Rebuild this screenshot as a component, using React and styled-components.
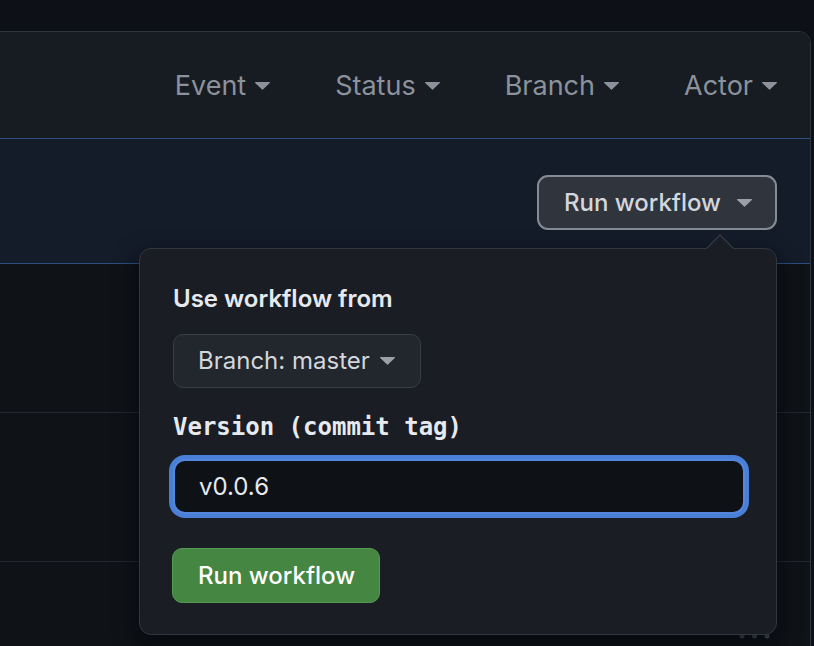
import React from "react";
import styled, { createGlobalStyle } from "styled-components";

const GlobalStyle = createGlobalStyle`
  * { box-sizing: border-box; }
  html, body { margin: 0; padding: 0; background: #0d1117; }
  body { font-family: Inter, "Noto Sans", sans-serif; overflow: hidden; }
`;

const Page = styled.div`
  width: 814px;
  height: 646px;
  overflow: hidden;
  padding: 31px 3px 0 0;
  background: #0d1117;
`;

const Box = styled.section`
  margin-left: -40px;
  border: 1px solid #30363d;
  border-radius: 12px;
  background: #0d1117;
`;

const Header = styled.header`
  height: 106px;
  display: flex;
  align-items: center;
  justify-content: flex-end;
  gap: 65px;
  padding-right: 33px;
  background: #171b22;
  border-radius: 11px 11px 0 0;
`;

const Filter = styled.button`
  display: flex;
  align-items: center;
  gap: 9px;
  padding: 0;
  border: 0;
  background: none;
  font: 400 27px/34px Inter, "Noto Sans", sans-serif;
  color: #8b929c;
  margin-top: 2px;
`;

const FocusRow = styled.div`
  height: 126px;
  display: flex;
  align-items: center;
  justify-content: flex-end;
  padding: 3px 33px 0 0;
  background: #141c2a;
  border-top: 1px solid #2b4d82;
  border-bottom: 1px solid #2b4d82;
`;

const Anchor = styled.div`
  position: relative;
`;

const SecondaryButton = styled.button`
  display: flex;
  align-items: center;
  gap: 16px;
  height: 55px;
  padding: 0 23px 0 25px;
  border: 2px solid #868c95;
  border-radius: 11px;
  background: #30343c;
  color: #d2d7de;
  font: 500 24px/1 Inter, "Noto Sans", sans-serif;
`;

const Popover = styled.div`
  position: absolute;
  z-index: 5;
  top: calc(100% + 18px);
  right: 0;
  width: 638px;
  padding: 36px 32px 31px 33px;
  background: #1a1d24;
  border: 1px solid #32363e;
  border-radius: 12px;
  box-shadow: 0 8px 24px rgba(1, 4, 9, 0.7);
  display: flex;
  flex-direction: column;
  align-items: flex-start;

  &::before,
  &::after {
    content: "";
    position: absolute;
    right: 42px;
    width: 0;
    height: 0;
    border: 14px solid transparent;
    border-top: 0;
  }
  &::before {
    top: -15px;
    border-bottom-color: #32363e;
  }
  &::after {
    top: -13px;
    border-bottom-color: #1a1d24;
  }
`;

const Title = styled.div`
  font: 600 24px/28px Inter, "Noto Sans", sans-serif;
  color: #e6eaef;
`;

const BranchButton = styled.button`
  margin-top: 21px;
  display: flex;
  align-items: center;
  gap: 10px;
  height: 54px;
  width: 248px;
  padding: 0 0 0 24px;
  border: 1px solid #383d45;
  border-radius: 10px;
  background: #22262d;
  color: #d2d7de;
  font: 400 24px/1 Inter, "Noto Sans", sans-serif;
`;

const FieldLabel = styled.label`
  margin-top: 25px;
  font: 700 24px/28px "DejaVu Sans Mono", "Liberation Mono", monospace;
  color: #e6eaef;
`;

const TextInput = styled.input`
  margin-top: 18px;
  width: 572px;
  height: 55px;
  padding: 0 0 0 24px;
  border: 2px solid #5386dc;
  border-radius: 12px;
  box-shadow: 0 0 0 4px #4a7fd8;
  outline: none;
  background: #0e1116;
  color: #e6eaef;
  font: 400 24px/1 Inter, "Noto Sans", sans-serif;
`;

const PrimaryButton = styled.button`
  margin-top: 34px;
  margin-left: -1px;
  height: 55px;
  padding: 0 24px 0 25px;
  border: 1px solid #529a50;
  border-radius: 10px;
  background: #448642;
  color: #ffffff;
  font: 500 24px/1 Inter, "Noto Sans", sans-serif;
`;

const Row = styled.div`
  height: 149px;
  display: flex;
  align-items: center;
  justify-content: flex-end;
  padding-right: 40px;
  border-bottom: 1px solid #23272e;
  background: #0f1217;
`;

const Caret = ({ color = "currentColor" }) => (
  <svg width="15" height="8" viewBox="0 0 15 8" aria-hidden="true">
    <path d="M0.6 0h13.8a.6.6 0 0 1 .42 1.02L7.92 7.6a.6.6 0 0 1-.84 0L.18 1.02A.6.6 0 0 1 .6 0Z" fill={color} />
  </svg>
);

const Kebab = () => (
  <svg width="32" height="8" viewBox="0 0 32 8" aria-hidden="true">
    <circle cx="4" cy="4" r="2.5" fill="#4a5058" />
    <circle cx="16.5" cy="4" r="2.5" fill="#4a5058" />
    <circle cx="29" cy="4" r="2.5" fill="#4a5058" />
  </svg>
);

export default function App() {
  return (
    <>
      <GlobalStyle />
      <Page>
        <Box>
          <Header>
            {["Event", "Status", "Branch", "Actor"].map((f) => (
              <Filter key={f}>
                {f}
                <Caret />
              </Filter>
            ))}
          </Header>
          <FocusRow>
            <Anchor>
              <SecondaryButton>
                Run workflow
                <Caret color="#9aa0a8" />
              </SecondaryButton>
              <Popover>
                <Title>Use workflow from</Title>
                <BranchButton>
                  Branch: master
                  <Caret color="#9aa0a8" />
                </BranchButton>
                <FieldLabel htmlFor="version">Version (commit tag)</FieldLabel>
                <TextInput id="version" defaultValue="v0.0.6" />
                <PrimaryButton>Run workflow</PrimaryButton>
              </Popover>
            </Anchor>
          </FocusRow>
          <Row><Kebab /></Row>
          <Row><Kebab /></Row>
          <Row><Kebab /></Row>
        </Box>
      </Page>
    </>
  );
}
